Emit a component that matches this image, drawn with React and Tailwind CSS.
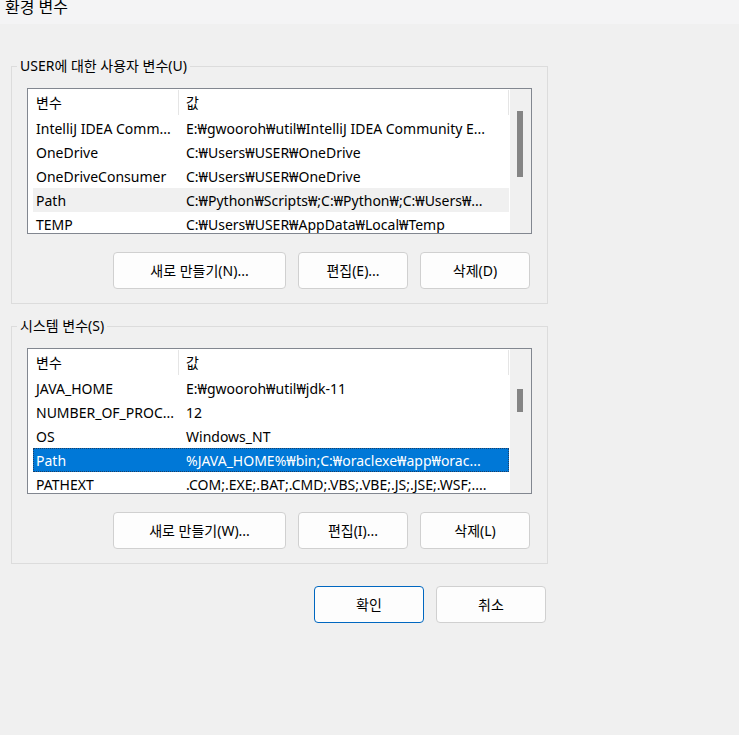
const userVars = [
  { name: "IntelliJ IDEA Comm...", value: "E:₩gwooroh₩util₩IntelliJ IDEA Community E..." },
  { name: "OneDrive", value: "C:₩Users₩USER₩OneDrive" },
  { name: "OneDriveConsumer", value: "C:₩Users₩USER₩OneDrive" },
  { name: "Path", value: "C:₩Python₩Scripts₩;C:₩Python₩;C:₩Users₩...", hover: true },
  { name: "TEMP", value: "C:₩Users₩USER₩AppData₩Local₩Temp" },
];

const systemVars = [
  { name: "JAVA_HOME", value: "E:₩gwooroh₩util₩jdk-11" },
  { name: "NUMBER_OF_PROC...", value: "12" },
  { name: "OS", value: "Windows_NT" },
  { name: "Path", value: "%JAVA_HOME%₩bin;C:₩oraclexe₩app₩orac...", selected: true },
  { name: "PATHEXT", value: ".COM;.EXE;.BAT;.CMD;.VBS;.VBE;.JS;.JSE;.WSF;...." },
];

function VarList({ rows, thumbTop, thumbHeight }) {
  return (
    <div className="flex h-[146px] w-[505px] overflow-hidden border border-[#828790] bg-white">
      <div className="flex min-w-0 flex-1 flex-col">
        {/* header */}
        <div className="ml-[5px] flex h-[27px] shrink-0 items-center">
          <div className="w-[145px] pl-[3px]">변수</div>
          <div className="h-[25px] w-px bg-[#e5e5e5]" />
          <div className="flex-1 pl-[7px]">값</div>
          <div className="h-[25px] w-px bg-[#e5e5e5]" />
        </div>
        {rows.map((r) => (
          <div
            key={r.name}
            className={
              "ml-[5px] flex h-[24px] shrink-0 items-center whitespace-nowrap " +
              (r.selected
                ? "bg-[#0078d7] text-white outline-1 outline-dotted outline-[#1d3f66] -outline-offset-1"
                : r.hover
                ? "bg-[#f0f0f0]"
                : "")
            }
          >
            <div className="w-[145px] overflow-hidden pl-[3px]">{r.name}</div>
            <div className="min-w-0 flex-1 overflow-hidden pl-[8px]">{r.value}</div>
          </div>
        ))}
      </div>
      {/* scrollbar */}
      <div className="w-[22px] shrink-0 border-l border-white bg-[#f0f0f0] pt-[1px]">
        <div className={"ml-[7px] w-[6px] bg-[#858585] " + thumbTop + " " + thumbHeight} />
      </div>
    </div>
  );
}

function Btn({ children, wide, primary }) {
  return (
    <button
      className={
        "flex h-[37px] items-center justify-center rounded-[4px] border bg-[#fdfdfd] text-[14px] text-black " +
        (wide ? "w-[173px] " : "w-[110px] ") +
        (primary ? "border-[#0067c0]" : "border-[#d0d0d0]")
      }
    >
      {children}
    </button>
  );
}

function Group({ label, children }) {
  return (
    <fieldset className="ml-[11px] w-[536px] border border-[#dcdcdc] px-[5px] pb-[14px] pt-[12px]">
      <legend className="px-[3px] leading-[20px]">{label}</legend>
      <div className="px-[10px]">{children}</div>
    </fieldset>
  );
}

export default function App() {
  return (
    <div
      className="h-[735px] w-[739px] overflow-hidden bg-[#f0f0f0] text-[14px] text-black"
      style={{ fontFamily: '"Noto Sans", "Noto Sans CJK KR", sans-serif' }}
    >
      {/* title bar, its text is cut at the top as in the capture */}
      <div className="h-[24px] overflow-hidden bg-[#f4f4f5] pl-[5px]">
        <div className="-mt-[5px] text-[16px] leading-[24px]">환경 변수</div>
      </div>

      <div className="mt-[32px]">
        <Group label="USER에 대한 사용자 변수(U)">
          <VarList rows={userVars} thumbTop="mt-[21px]" thumbHeight="h-[66px]" />
          <div className="mt-[18px] flex gap-[12px] pl-[86px]">
            <Btn wide>새로 만들기(N)...</Btn>
            <Btn>편집(E)...</Btn>
            <Btn>삭제(D)</Btn>
          </div>
        </Group>
      </div>

      <div className="mt-[12px]">
        <Group label="시스템 변수(S)">
          <VarList rows={systemVars} thumbTop="mt-[39px]" thumbHeight="h-[23px]" />
          <div className="mt-[18px] flex gap-[12px] pl-[86px]">
            <Btn wide>새로 만들기(W)...</Btn>
            <Btn>편집(I)...</Btn>
            <Btn>삭제(L)</Btn>
          </div>
        </Group>
      </div>

      <div className="mt-[22px] flex w-[546px] justify-end gap-[12px]">
        <Btn primary>확인</Btn>
        <Btn>취소</Btn>
      </div>
    </div>
  );
}
